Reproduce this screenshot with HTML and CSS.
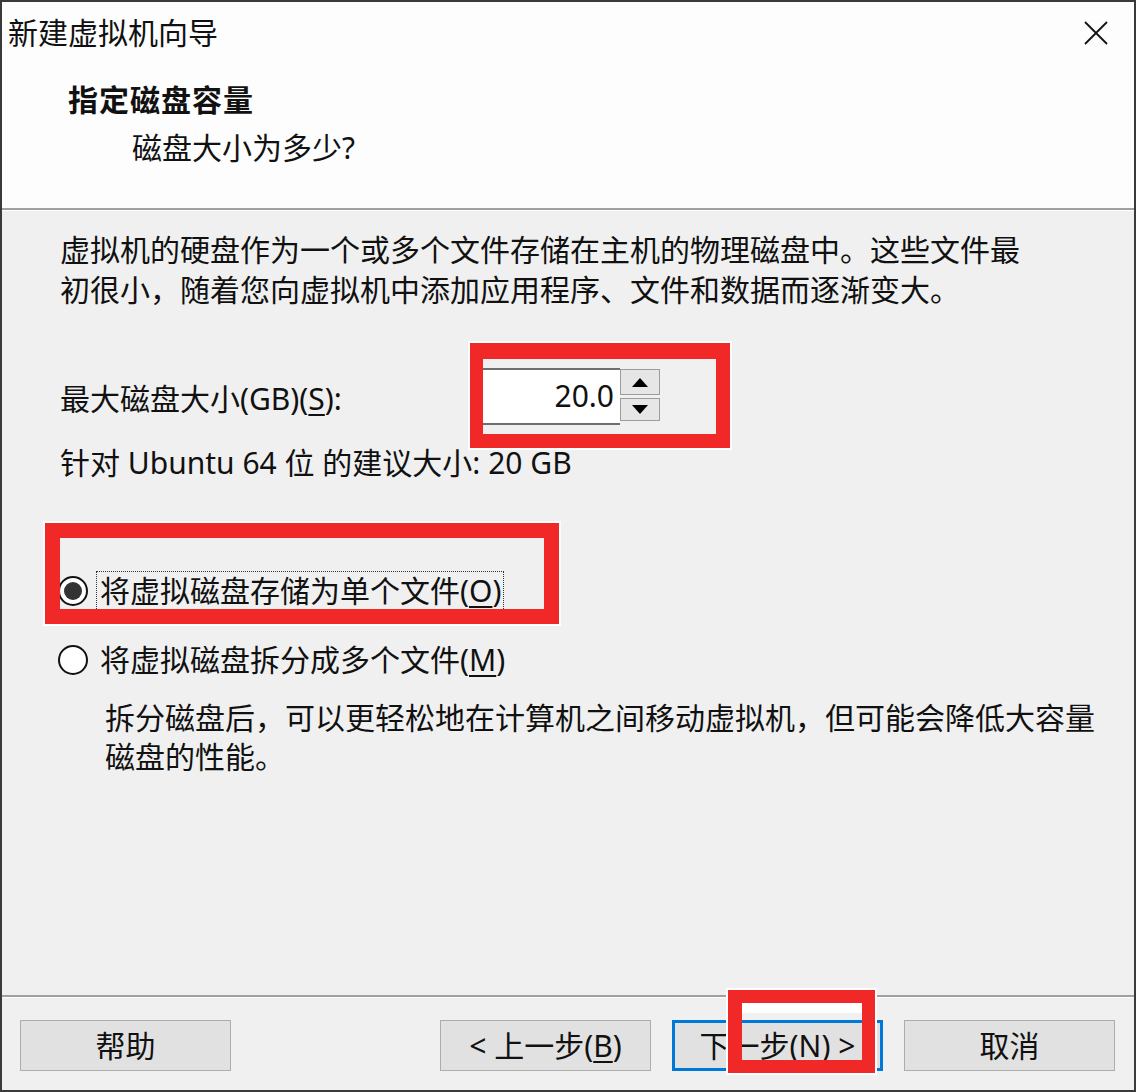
FILE: index.html
```html
<!DOCTYPE html>
<html lang="zh-CN">
<head>
<meta charset="utf-8">
<title>新建虚拟机向导</title>
<link rel="stylesheet" href="styles.css">
</head>
<body>
<div class="window">
  <header class="head">
    <div class="titlebar">
      <span class="title">新建虚拟机向导</span>
      <svg class="close" width="24" height="24" viewBox="0 0 24 24"><path d="M1 1 L23 23 M23 1 L1 23" stroke="#111" stroke-width="1.8" fill="none"/></svg>
    </div>
    <div class="heading">指定磁盘容量</div>
    <div class="subheading">磁盘大小为多少?</div>
  </header>
  <main class="content">
    <p class="intro">虚拟机的硬盘作为一个或多个文件存储在主机的物理磁盘中。这些文件最<br>初很小，随着您向虚拟机中添加应用程序、文件和数据而逐渐变大。</p>
    <div class="size-row">
      <span class="size-label">最大磁盘大小(GB)(<u>S</u>):</span>
      <div class="field">20.0</div>
      <div class="spinner">
        <span class="spin up"><svg width="16" height="9" viewBox="0 0 16 9"><path d="M8 0 L16 9 L0 9 Z" fill="#000"/></svg></span>
        <span class="spin down"><svg width="16" height="9" viewBox="0 0 16 9"><path d="M0 0 L16 0 L8 9 Z" fill="#000"/></svg></span>
      </div>
    </div>
    <div class="hint">针对 Ubuntu 64 位 的建议大小: 20 GB</div>
    <div class="radio-row first">
      <span class="radio checked"></span>
      <span class="radio-label focus">将虚拟磁盘存储为单个文件(<u>O</u>)</span>
    </div>
    <div class="radio-row second">
      <span class="radio"></span>
      <span class="radio-label">将虚拟磁盘拆分成多个文件(<u>M</u>)</span>
    </div>
    <p class="desc">拆分磁盘后，可以更轻松地在计算机之间移动虚拟机，但可能会降低大容量<br>磁盘的性能。</p>
  </main>
  <footer class="footer">
    <button class="btn">帮助</button>
    <div class="nav">
      <button class="btn">&lt; 上一步(<u>B</u>)</button>
      <button class="btn primary">下一步(<u>N</u>) &gt;</button>
      <button class="btn">取消</button>
    </div>
  </footer>
</div>
<div class="mark mark-size"></div>
<div class="mark mark-radio"></div>
<div class="mark mark-next"></div>
</body>
</html>
```
FILE: styles.css
```css
html, body {
  margin: 0;
  padding: 0;
  background: #ffffff;
}
body {
  font-family: "Noto Sans", "Noto Sans CJK SC", sans-serif;
  font-size: 30px;
  color: #111;
}
.window {
  box-sizing: border-box;
  width: 1136px;
  height: 1092px;
  border: 2px solid #3a3a3a;
  background: #f0f0f0;
  display: flex;
  flex-direction: column;
}
.head {
  background: #fdfdfd;
  height: 206px;
  border-bottom: 2px solid #a0a0a0;
  box-shadow: 0 1px 0 #ffffff;
  flex: none;
}
.titlebar {
  display: flex;
  justify-content: space-between;
  align-items: center;
  padding: 11px 26px 0 6px;
  height: 40px;
}
.title {
  line-height: 40px;
}
.close {
  display: block;
}
.heading {
  margin-top: 27px;
  padding-left: 66px;
  line-height: 40px;
  font-weight: bold;
  letter-spacing: 1px;
}
.subheading {
  margin-top: 8px;
  padding-left: 130px;
  line-height: 40px;
}
.content {
  flex: 1;
  padding-left: 58px;
}
.intro {
  margin: 20px 0 0;
  line-height: 40px;
}
.size-row {
  display: flex;
  align-items: center;
  margin-top: 58px;
  height: 57px;
}
.size-label {
  width: 418px;
  flex: none;
}
.field {
  box-sizing: border-box;
  width: 142px;
  height: 57px;
  background: #fff;
  border-top: 2px solid #6e6e6e;
  border-bottom: 2px solid #6e6e6e;
  border-left: 1px solid #6e6e6e;
  text-align: right;
  padding-right: 6px;
  line-height: 51px;
}
.spinner {
  display: flex;
  flex-direction: column;
  gap: 3px;
  align-self: flex-start;
  margin-top: 1px;
}
.spin {
  box-sizing: border-box;
  width: 40px;
  display: flex;
  align-items: center;
  justify-content: center;
  background: #e6e6e6;
  border: 1px solid #9c9c9c;
}
.spin.up { height: 26px; }
.spin.down { height: 23px; }
.hint {
  margin-top: 18px;
  line-height: 40px;
}
.radio-row {
  display: flex;
  align-items: center;
  height: 40px;
  margin-left: -2px;
}
.radio-row.first { margin-top: 88px; }
.radio-row.second { margin-top: 29px; }
.radio {
  box-sizing: border-box;
  width: 30px;
  height: 30px;
  border: 2px solid #111;
  border-radius: 50%;
  background: #fff;
  display: flex;
  align-items: center;
  justify-content: center;
  flex: none;
  margin-right: 8px;
}
.radio.checked::after {
  content: "";
  width: 18px;
  height: 18px;
  border-radius: 50%;
  background: #333;
}
.radio-label {
  line-height: 38px;
  padding: 0 2px 0 3px;
  border: 1px solid transparent;
}
.radio-label.focus {
  border: 1px dotted #333;
}
.desc {
  margin: 18px 0 0 45px;
  line-height: 39px;
}
u {
  text-underline-offset: 4px;
  text-decoration-thickness: 2px;
}
.footer {
  flex: none;
  height: 95px;
  border-top: 2px solid #a0a0a0;
  box-shadow: inset 0 1px 0 #ffffff;
  box-sizing: border-box;
  display: flex;
  align-items: flex-start;
  padding: 23px 19px 0 18px;
}
.nav {
  margin-left: auto;
  display: flex;
  gap: 21px;
}
.btn {
  box-sizing: border-box;
  width: 211px;
  height: 51px;
  border: 1px solid #adadad;
  background: #e1e1e1;
  font-family: "Noto Sans", "Noto Sans CJK SC", sans-serif;
  font-size: 30px;
  color: #111;
  padding: 0;
  line-height: 47px;
}
.btn.primary {
  border: 3px solid #0078d7;
  line-height: 45px;
}
.mark {
  position: absolute;
  box-sizing: border-box;
  border: 14px solid #f02828;
  box-shadow: 0 0 0 2px #ffffff;
}
.mark-size {
  left: 470px;
  top: 343px;
  width: 260px;
  height: 105px;
  border-width: 16px 14px 14px 13px;
}
.mark-radio {
  left: 45px;
  top: 523px;
  width: 514px;
  height: 101px;
  border-width: 15px 15px 15px 15px;
}
.mark-next {
  left: 728px;
  top: 990px;
  width: 147px;
  height: 83px;
  border-width: 13px 13px 13px 14px;
}
.mark-next::before {
  content: "";
  position: absolute;
  left: 0;
  right: 0;
  top: 0;
  height: 10px;
  background: #ffffff;
}
```
